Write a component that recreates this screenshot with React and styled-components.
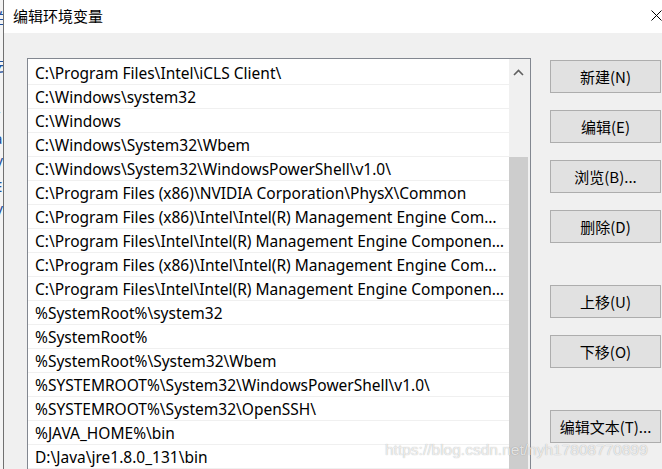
import React from "react";
import styled, { createGlobalStyle } from "styled-components";

const paths = [
  "C:\\Program Files\\Intel\\iCLS Client\\",
  "C:\\Windows\\system32",
  "C:\\Windows",
  "C:\\Windows\\System32\\Wbem",
  "C:\\Windows\\System32\\WindowsPowerShell\\v1.0\\",
  "C:\\Program Files (x86)\\NVIDIA Corporation\\PhysX\\Common",
  "C:\\Program Files (x86)\\Intel\\Intel(R) Management Engine Components\\DAL",
  "C:\\Program Files\\Intel\\Intel(R) Management Engine Components\\DAL",
  "C:\\Program Files (x86)\\Intel\\Intel(R) Management Engine Components\\IPT",
  "C:\\Program Files\\Intel\\Intel(R) Management Engine Components\\IPT",
  "%SystemRoot%\\system32",
  "%SystemRoot%",
  "%SystemRoot%\\System32\\Wbem",
  "%SYSTEMROOT%\\System32\\WindowsPowerShell\\v1.0\\",
  "%SYSTEMROOT%\\System32\\OpenSSH\\",
  "%JAVA_HOME%\\bin",
  "D:\\Java\\jre1.8.0_131\\bin",
];

const buttons = [
  { label: "新建(N)", gap: 0 },
  { label: "编辑(E)", gap: 17 },
  { label: "浏览(B)...", gap: 17 },
  { label: "删除(D)", gap: 17 },
  { label: "上移(U)", gap: 42 },
  { label: "下移(O)", gap: 17 },
  { label: "编辑文本(T)...", gap: 42 },
];

const behind = ["白", "", "云", "t", "r", "a", "V", "E", "V"];

function App() {
  return (
    <>
      <GlobalStyle />
      <Screen>
        <LeftStrip>
          {behind.map((c, i) => (
            <BehindChar key={i}>{c}</BehindChar>
          ))}
        </LeftStrip>
        <Window>
          <TitleBar>
            <Title>编辑环境变量</Title>
            <Close>
              <svg width="11" height="11" viewBox="0 0 11 11">
                <path d="M0.5 0.5 L10.5 10.5 M10.5 0.5 L0.5 10.5" stroke="#000" strokeWidth="1" />
              </svg>
            </Close>
          </TitleBar>
          <Body>
            <ListBox>
              <Rows>
                {paths.map((p) => (
                  <Row key={p}>{p}</Row>
                ))}
              </Rows>
              <ScrollBar>
                <Arrow>
                  <svg width="11" height="7" viewBox="0 0 11 7">
                    <path d="M1 6 L5.5 1.5 L10 6" fill="none" stroke="#606060" strokeWidth="1.6" />
                  </svg>
                </Arrow>
                <Thumb />
              </ScrollBar>
            </ListBox>
            <ButtonColumn>
              {buttons.map((b) => (
                <Button key={b.label} $gap={b.gap}>
                  {b.label}
                </Button>
              ))}
            </ButtonColumn>
          </Body>
        </Window>
        <Watermark>https://blog.csdn.net/nyh17808770899</Watermark>
      </Screen>
    </>
  );
}

const GlobalStyle = createGlobalStyle`
  body {
    margin: 0;
    background: #f0f0f0;
    font-family: "Noto Sans", "Noto Sans CJK SC", sans-serif;
  }
`;

const Screen = styled.div`
  position: relative;
  width: 662px;
  height: 469px;
  overflow: hidden;
  display: flex;
`;

const LeftStrip = styled.div`
  width: 3px;
  flex-shrink: 0;
  background: #f4f4f4;
  border-right: 1px solid #707070;
  overflow: hidden;
  display: flex;
  flex-direction: column;
  padding-top: 8px;
`;

const BehindChar = styled.div`
  height: 24px;
  flex-shrink: 0;
  font-size: 15px;
  line-height: 20px;
  color: #1e4f9c;
  margin-left: -6px;
  font-family: "Noto Sans", "Noto Sans CJK SC", sans-serif;
`;

const Window = styled.div`
  flex: 1;
  display: flex;
  flex-direction: column;
  min-height: 0;
`;

const TitleBar = styled.div`
  height: 33px;
  flex-shrink: 0;
  background: #fff;
  display: flex;
  align-items: center;
  justify-content: space-between;
  padding: 0 0 0 9px;
`;

const Title = styled.div`
  font-family: "Noto Sans CJK SC", sans-serif;
  font-size: 15px;
  color: #000;
  margin-top: -2px;
`;

const Close = styled.div`
  display: flex;
  margin-top: -2px;
`;

const Body = styled.div`
  flex: 1;
  display: flex;
  align-items: flex-start;
  padding: 25px 0 0 23px;
  background: #f0f0f0;
`;

const ListBox = styled.div`
  width: 504px;
  height: 430px;
  flex-shrink: 0;
  box-sizing: border-box;
  border: 1px solid #828790;
  background: #fff;
  display: flex;
`;

const Rows = styled.div`
  flex: 1;
  padding-top: 2px;
  min-width: 0;
`;

const Row = styled.div`
  height: 24px;
  box-sizing: border-box;
  border-bottom: 1px solid #f0f0f0;
  padding: 0 4px 0 7px;
  font-family: "Noto Sans", "Noto Sans CJK SC", sans-serif;
  font-size: 15.5px;
  line-height: 25px;
  color: #000;
  white-space: nowrap;
  overflow: hidden;
  text-overflow: ellipsis;
`;

const ScrollBar = styled.div`
  width: 21px;
  background: #f0f0f0;
  display: flex;
  flex-direction: column;
`;

const Arrow = styled.div`
  height: 98px;
  flex-shrink: 0;
  display: flex;
  justify-content: center;
  padding-right: 2px;
  padding-top: 10px;
  box-sizing: border-box;
`;

const Thumb = styled.div`
  flex: 1;
  width: 19px;
  background: #cdcdcd;
`;

const ButtonColumn = styled.div`
  display: flex;
  flex-direction: column;
  margin-left: 19px;
  margin-top: 2px;
`;

const Button = styled.div`
  width: 111px;
  height: 33px;
  flex-shrink: 0;
  box-sizing: border-box;
  margin-top: ${(p) => p.$gap}px;
  background: #e1e1e1;
  border: 1px solid #adadad;
  display: flex;
  align-items: center;
  justify-content: center;
  font-family: "Noto Sans CJK SC", sans-serif;
  font-size: 15px;
  line-height: 1;
  padding-bottom: 1px;
  color: #000;
`;

const Watermark = styled.div`
  position: absolute;
  left: 385px;
  top: 441px;
  font-family: "Liberation Sans", Arial, sans-serif;
  font-size: 15.5px;
  color: rgba(255, 255, 255, 0.75);
  text-shadow: 0 0 1px rgba(0, 0, 0, 0.35);
  white-space: nowrap;
`;

export default App;
